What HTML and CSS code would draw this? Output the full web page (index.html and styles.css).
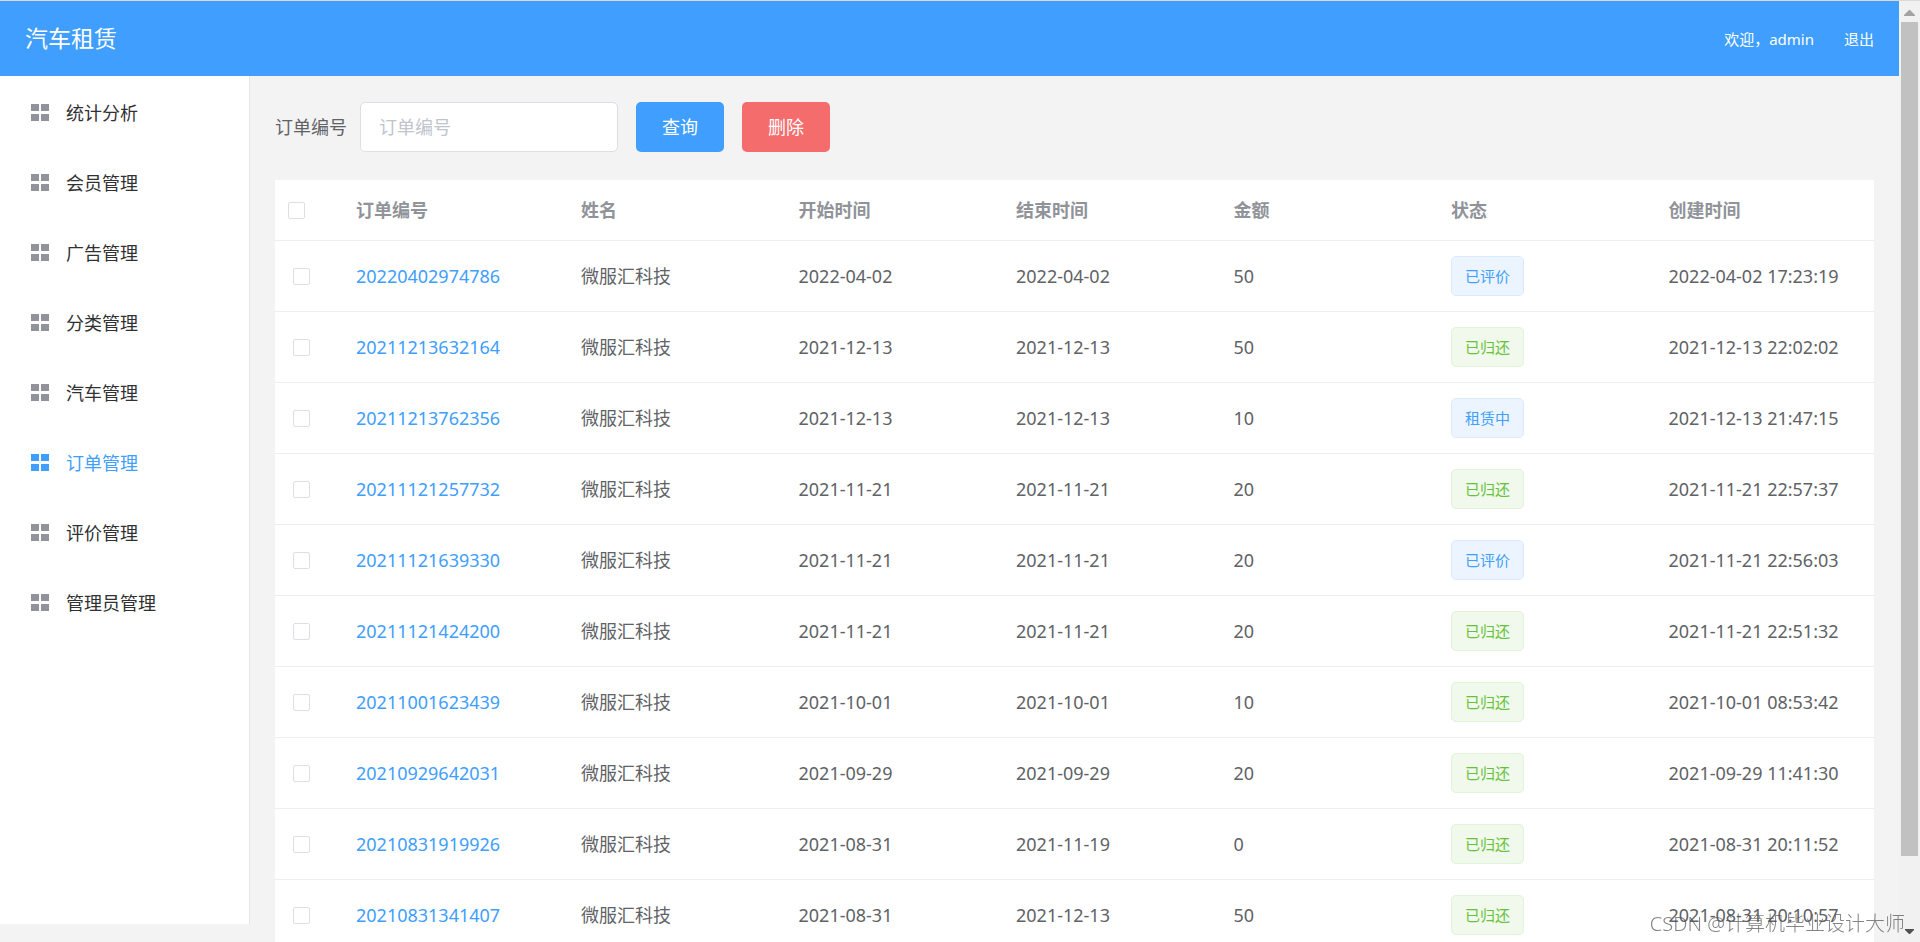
FILE: index.html
```html
<!DOCTYPE html>
<html lang="zh-CN">
<head>
<meta charset="utf-8">
<title>汽车租赁</title>
<link rel="stylesheet" href="styles.css">
</head>
<body>
<svg class="sprite" aria-hidden="true">
  <symbol id="grid" viewBox="0 0 18 18"><path d="M0 0h8v7H0zM10 0h8v7h-8zM0 10h8v7H0zM10 10h8v7h-8z"/></symbol>
</svg>
<div class="app">
  <header class="header">
    <h1 class="brand">汽车租赁</h1>
    <nav class="user">
      <span>欢迎，admin</span>
      <a href="#">退出</a>
    </nav>
  </header>
  <div class="body">
    <nav class="sidebar">
      <a class="item" href="#"><svg class="icon"><use href="#grid"/></svg>统计分析</a>
      <a class="item" href="#"><svg class="icon"><use href="#grid"/></svg>会员管理</a>
      <a class="item" href="#"><svg class="icon"><use href="#grid"/></svg>广告管理</a>
      <a class="item" href="#"><svg class="icon"><use href="#grid"/></svg>分类管理</a>
      <a class="item" href="#"><svg class="icon"><use href="#grid"/></svg>汽车管理</a>
      <a class="item active" href="#"><svg class="icon"><use href="#grid"/></svg>订单管理</a>
      <a class="item" href="#"><svg class="icon"><use href="#grid"/></svg>评价管理</a>
      <a class="item" href="#"><svg class="icon"><use href="#grid"/></svg>管理员管理</a>
    </nav>
    <main class="main">
      <form class="search">
        <label for="order-no">订单编号</label>
        <input class="field" id="order-no" type="text" placeholder="订单编号">
        <button class="btn primary" type="button">查询</button>
        <button class="btn danger" type="button">删除</button>
      </form>
      <table class="table">
        <colgroup><col class="col-check"><col class="col-order"><col><col><col><col><col><col></colgroup>
        <thead>
          <tr><th><input class="check" type="checkbox" aria-label="全选"></th><th>订单编号</th><th>姓名</th><th>开始时间</th><th>结束时间</th><th>金额</th><th>状态</th><th>创建时间</th></tr>
        </thead>
        <tbody>
          <tr><td><input class="check" type="checkbox" aria-label="选择"></td><td><a href="#">20220402974786</a></td><td>微服汇科技</td><td>2022-04-02</td><td>2022-04-02</td><td>50</td><td><span class="tag">已评价</span></td><td>2022-04-02 17:23:19</td></tr>
          <tr><td><input class="check" type="checkbox" aria-label="选择"></td><td><a href="#">20211213632164</a></td><td>微服汇科技</td><td>2021-12-13</td><td>2021-12-13</td><td>50</td><td><span class="tag success">已归还</span></td><td>2021-12-13 22:02:02</td></tr>
          <tr><td><input class="check" type="checkbox" aria-label="选择"></td><td><a href="#">20211213762356</a></td><td>微服汇科技</td><td>2021-12-13</td><td>2021-12-13</td><td>10</td><td><span class="tag">租赁中</span></td><td>2021-12-13 21:47:15</td></tr>
          <tr><td><input class="check" type="checkbox" aria-label="选择"></td><td><a href="#">20211121257732</a></td><td>微服汇科技</td><td>2021-11-21</td><td>2021-11-21</td><td>20</td><td><span class="tag success">已归还</span></td><td>2021-11-21 22:57:37</td></tr>
          <tr><td><input class="check" type="checkbox" aria-label="选择"></td><td><a href="#">20211121639330</a></td><td>微服汇科技</td><td>2021-11-21</td><td>2021-11-21</td><td>20</td><td><span class="tag">已评价</span></td><td>2021-11-21 22:56:03</td></tr>
          <tr><td><input class="check" type="checkbox" aria-label="选择"></td><td><a href="#">20211121424200</a></td><td>微服汇科技</td><td>2021-11-21</td><td>2021-11-21</td><td>20</td><td><span class="tag success">已归还</span></td><td>2021-11-21 22:51:32</td></tr>
          <tr><td><input class="check" type="checkbox" aria-label="选择"></td><td><a href="#">20211001623439</a></td><td>微服汇科技</td><td>2021-10-01</td><td>2021-10-01</td><td>10</td><td><span class="tag success">已归还</span></td><td>2021-10-01 08:53:42</td></tr>
          <tr><td><input class="check" type="checkbox" aria-label="选择"></td><td><a href="#">20210929642031</a></td><td>微服汇科技</td><td>2021-09-29</td><td>2021-09-29</td><td>20</td><td><span class="tag success">已归还</span></td><td>2021-09-29 11:41:30</td></tr>
          <tr><td><input class="check" type="checkbox" aria-label="选择"></td><td><a href="#">20210831919926</a></td><td>微服汇科技</td><td>2021-08-31</td><td>2021-11-19</td><td>0</td><td><span class="tag success">已归还</span></td><td>2021-08-31 20:11:52</td></tr>
          <tr><td><input class="check" type="checkbox" aria-label="选择"></td><td><a href="#">20210831341407</a></td><td>微服汇科技</td><td>2021-08-31</td><td>2021-12-13</td><td>50</td><td><span class="tag success">已归还</span></td><td>2021-08-31 20:10:57</td></tr>
        </tbody>
      </table>
    </main>
  </div>
</div>
<div class="scrollbar" aria-hidden="true">
  <svg class="arrow" viewBox="0 0 21 21"><path fill="#a3a3a3" d="M10 9h1l5 5v1H5v-1z"/></svg>
  <div class="track"><div class="thumb"></div></div>
  <svg class="arrow" viewBox="0 0 21 21"><path fill="#505050" d="M6 8h9v1l-4 4h-1L6 9z"/></svg>
</div>
<div class="watermark">CSDN @计算机毕业设计大师</div>
</body>
</html>
```
FILE: styles.css
```css
* { box-sizing: border-box; }

body {
  display: flex;
  height: 100vh;
  margin: 0;
  overflow: hidden;
  border-top: 1px solid #dadada;
  background: #f3f3f3;
  color: #606266;
  font: 400 18px/24px "Noto Sans", "Noto Sans CJK SC", sans-serif;
}

a { color: #409eff; text-decoration: none; }

.sprite { position: absolute; width: 0; height: 0; }

.app { flex: 1; min-width: 0; overflow: hidden; }

.header {
  display: flex;
  align-items: center;
  justify-content: space-between;
  height: 75px;
  padding: 0 25px 2px;
  background: #409eff;
  color: #fff;
}

.brand { margin: 0; font-size: 23px; font-weight: 400; }

.user { display: flex; gap: 30px; padding-top: 2px; font-size: 15px; }
.user a { color: #fff; }

.body { display: flex; align-items: flex-start; }

.sidebar {
  flex: none;
  width: 250px;
  height: calc(100vh - 94px);
  padding-top: 2px;
  border-right: 1px solid #e6e6e6;
  background: #fff;
}

.item {
  display: flex;
  align-items: center;
  gap: 17px;
  height: 70px;
  padding-left: 31px;
  color: #303133;
}
.item.active { color: #409eff; }

.icon { width: 18px; height: 18px; fill: #909399; }
.active .icon { fill: #409eff; }

.main { flex: 1; min-width: 0; padding: 26px 25px; }

.search { display: flex; align-items: center; margin-bottom: 28px; }

.field {
  width: 258px;
  height: 50px;
  margin: 0 18px 0 13px;
  padding: 0 18px;
  border: 1px solid #dcdfe6;
  border-radius: 5px;
  background: #fff;
  color: #606266;
  font: inherit;
}
.field::placeholder { color: #c0c4cc; opacity: 1; }

.btn {
  width: 88px;
  height: 50px;
  margin-right: 18px;
  padding: 0;
  border: 0;
  border-radius: 5px;
  color: #fff;
  font: inherit;
}
.primary { background: #409eff; }
.danger { background: #f56c6c; }

.table {
  width: 100%;
  border-spacing: 0;
  table-layout: fixed;
  background: #fff;
}
.col-check { width: 69px; }
.col-order { width: 225px; }

.table th,
.table td {
  height: 71px;
  padding: 0 12px;
  border-bottom: 1px solid #ebeef5;
  text-align: left;
  white-space: nowrap;
}
.table th { height: 61px; color: #909399; font-weight: 700; }
.table th:first-child { padding-left: 13px; }
.table td:first-child { padding-left: 18px; }

.check {
  display: block;
  appearance: none;
  width: 17px;
  height: 17px;
  margin: 0;
  border: 1px solid #dcdfe6;
  border-radius: 2px;
  background: #fff;
}

.tag {
  display: inline-block;
  height: 40px;
  padding: 0 13px;
  border: 1px solid #d9ecff;
  border-radius: 5px;
  background: #ecf5ff;
  color: #409eff;
  font-size: 15px;
  line-height: 38px;
  vertical-align: middle;
}
.tag.success { border-color: #e1f3d8; background: #f0f9eb; color: #67c23a; }

.scrollbar {
  display: flex;
  flex: none;
  flex-direction: column;
  width: 21px;
  background: #f1f1f1;
}
.arrow { flex: none; width: 21px; height: 21px; }
.track { flex: 1; padding: 0 2px; }
.thumb { height: 92.8%; background: #c1c1c1; }

.watermark {
  position: fixed;
  right: 15px;
  bottom: 6px;
  color: rgba(80, 80, 80, 0.7);
  font-size: 20px;
  font-weight: 300;
}
```
